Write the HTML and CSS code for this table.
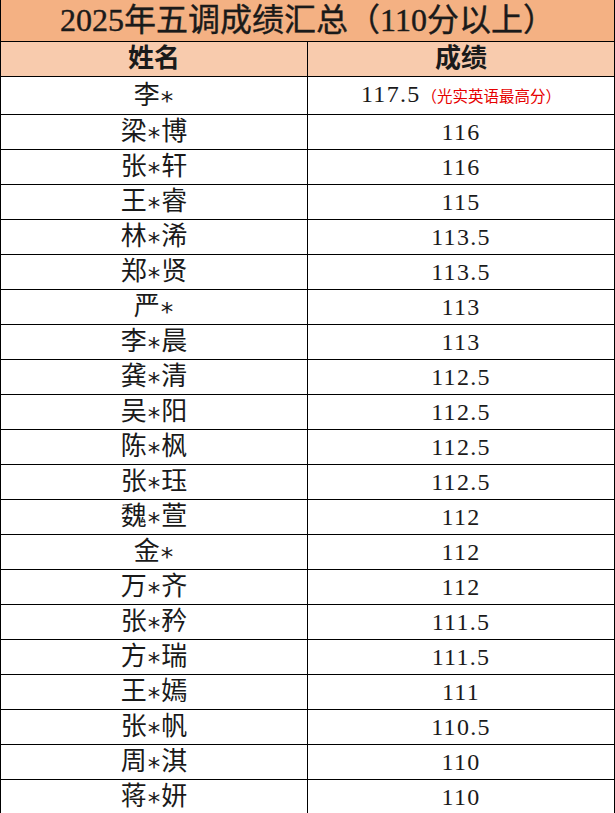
FILE: index.html
```html
<!DOCTYPE html>
<html lang="zh-CN">
<head>
<meta charset="utf-8">
<title>2025年五调成绩汇总</title>
<link rel="stylesheet" href="styles.css">
</head>
<body>
<table class="sheet">
  <colgroup><col class="c-name"><col class="c-score"></colgroup>
  <thead>
    <tr class="title"><th colspan="2">2025年五调成绩汇总（110分以上）</th></tr>
    <tr class="head"><th>姓名</th><th>成绩</th></tr>
  </thead>
  <tbody>
    <tr><td>李<span class="mask">*</span></td><td><span class="num">117.5</span><span class="note">（光实英语最高分）</span></td></tr>
    <tr><td>梁<span class="mask">*</span>博</td><td><span class="num">116</span></td></tr>
    <tr><td>张<span class="mask">*</span>轩</td><td><span class="num">116</span></td></tr>
    <tr><td>王<span class="mask">*</span>睿</td><td><span class="num">115</span></td></tr>
    <tr><td>林<span class="mask">*</span>浠</td><td><span class="num">113.5</span></td></tr>
    <tr><td>郑<span class="mask">*</span>贤</td><td><span class="num">113.5</span></td></tr>
    <tr><td>严<span class="mask">*</span></td><td><span class="num">113</span></td></tr>
    <tr><td>李<span class="mask">*</span>晨</td><td><span class="num">113</span></td></tr>
    <tr><td>龚<span class="mask">*</span>清</td><td><span class="num">112.5</span></td></tr>
    <tr><td>吴<span class="mask">*</span>阳</td><td><span class="num">112.5</span></td></tr>
    <tr><td>陈<span class="mask">*</span>枫</td><td><span class="num">112.5</span></td></tr>
    <tr><td>张<span class="mask">*</span>珏</td><td><span class="num">112.5</span></td></tr>
    <tr><td>魏<span class="mask">*</span>萱</td><td><span class="num">112</span></td></tr>
    <tr><td>金<span class="mask">*</span></td><td><span class="num">112</span></td></tr>
    <tr><td>万<span class="mask">*</span>齐</td><td><span class="num">112</span></td></tr>
    <tr><td>张<span class="mask">*</span>矜</td><td><span class="num">111.5</span></td></tr>
    <tr><td>方<span class="mask">*</span>瑞</td><td><span class="num">111.5</span></td></tr>
    <tr><td>王<span class="mask">*</span>嫣</td><td><span class="num">111</span></td></tr>
    <tr><td>张<span class="mask">*</span>帆</td><td><span class="num">110.5</span></td></tr>
    <tr><td>周<span class="mask">*</span>淇</td><td><span class="num">110</span></td></tr>
    <tr><td>蒋<span class="mask">*</span>妍</td><td><span class="num">110</span></td></tr>
  </tbody>
</table>
</body>
</html>
```

FILE: styles.css
```css
html, body {
  margin: 0;
  padding: 0;
  background: #ffffff;
}

.sheet {
  width: 614px;
  border-collapse: collapse;
  table-layout: fixed;
  font-family: "Liberation Serif", "Noto Sans CJK SC", serif;
  color: #1a1a1a;
}

.c-name { width: 307px; }
.c-score { width: 307px; }

.sheet th,
.sheet td {
  border: 1px solid #000;
  padding: 0;
  text-align: center;
  vertical-align: middle;
  white-space: nowrap;
}

.title th {
  height: 41px;
  background: #f4b183;
  font-size: 32px;
  font-weight: normal;
  border-top: none;
  line-height: 41px;
  -webkit-text-stroke: 0.4px #1a1a1a;
}

.head th {
  height: 34px;
  background: #f8cbad;
  font-size: 26px;
  font-weight: bold;
  line-height: 34px;
}

.sheet td {
  height: 34px;
  line-height: 34px;
  font-size: 24px;
}

.sheet td:first-child {
  font-size: 26px;
}

.num {
  letter-spacing: 1.3px;
}

.mask {
  font-family: "DejaVu Sans", sans-serif;
  font-size: 25px;
  line-height: 0;
  vertical-align: -5px;
  padding: 0 1px;
}

.note {
  font-size: 15.5px;
  color: #e60000;
  letter-spacing: 0;
  padding-left: 1px;
}
```
